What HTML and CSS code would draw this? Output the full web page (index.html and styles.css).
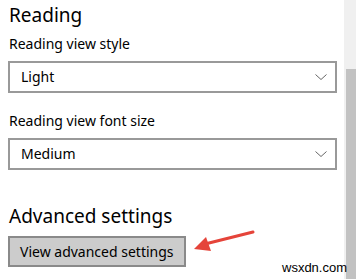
FILE: index.html
```html
<!DOCTYPE html>
<html>
<head>
    <meta charset="UTF-8">
    <link rel="stylesheet" href="styles.css">
</head>
<body>
    <div class="window">
        <div class="panel">
            <div class="heading">Reading</div>
            <div class="label">Reading view style</div>
            <div class="select">
                <span>Light</span>
                <svg class="chevron" width="12" height="6" viewBox="0 0 12 6"><polyline points="0.5,0.5 6,5.5 11.5,0.5"/></svg>
            </div>
            <div class="label second">Reading view font size</div>
            <div class="select">
                <span>Medium</span>
                <svg class="chevron" width="12" height="6" viewBox="0 0 12 6"><polyline points="0.5,0.5 6,5.5 11.5,0.5"/></svg>
            </div>
            <div class="heading advanced">Advanced settings</div>
            <div class="button">View advanced settings</div>
        </div>
        <div class="scrollbar">
            <div class="thumb"></div>
        </div>
        <svg class="arrow" width="356" height="279" viewBox="0 0 356 279">
            <line x1="253" y1="232" x2="205" y2="244"/>
            <polygon points="194,249 206,237 211,251"/>
        </svg>
        <div class="watermark">wsxdn.com</div>
    </div>
</body>
</html>
```

FILE: styles.css
```css
body {
    margin: 0;
    padding: 0;
    background: white;
}
div.window {
    display: flex;
    height: 279px;
    width: 356px;
    overflow: hidden;
    position: relative;
    font-family: 'Noto Sans', 'Open Sans', sans-serif;
    color: #000;
}
div.panel {
    flex: 1;
    padding: 0 7px 0 8px;
}
div.heading {
    font-size: 19px;
    line-height: 26px;
    margin-top: 2px;
    padding-left: 1px;
}
div.heading.advanced {
    margin-top: 33px;
}
div.label {
    font-size: 14px;
    line-height: 20px;
    margin-top: 6px;
    padding-left: 1px;
}
div.label.second {
    margin-top: 18px;
}
div.select {
    border: 2px solid #999;
    height: 28px;
    margin-top: 7px;
    display: flex;
    align-items: center;
    justify-content: space-between;
    font-size: 14px;
    padding: 0 8px 0 11px;
}
div.select span {
    line-height: 28px;
}
svg.chevron polyline {
    fill: none;
    stroke: #666;
    stroke-width: 1;
}
div.button {
    display: inline-block;
    margin-top: 7px;
    border: 2px solid #8a8a8a;
    background: #cccccc;
    font-size: 14px;
    line-height: 27px;
    padding: 0 10px;
}
div.scrollbar {
    width: 12px;
    background: #f0f0f0;
    display: flex;
    flex-direction: column;
}
div.thumb {
    margin-top: 69px;
    margin-left: 2px;
    flex: 1;
    background: #c2c2c2;
}
svg.arrow {
    position: absolute;
    left: 0;
    top: 0;
}
svg.arrow line {
    stroke: #e5443a;
    stroke-width: 3;
    stroke-linecap: round;
}
svg.arrow polygon {
    fill: #e5443a;
}
div.watermark {
    position: absolute;
    left: 282px;
    top: 260px;
    font-family: 'Liberation Sans', Arial, sans-serif;
    font-size: 13px;
    color: #000;
}
```
